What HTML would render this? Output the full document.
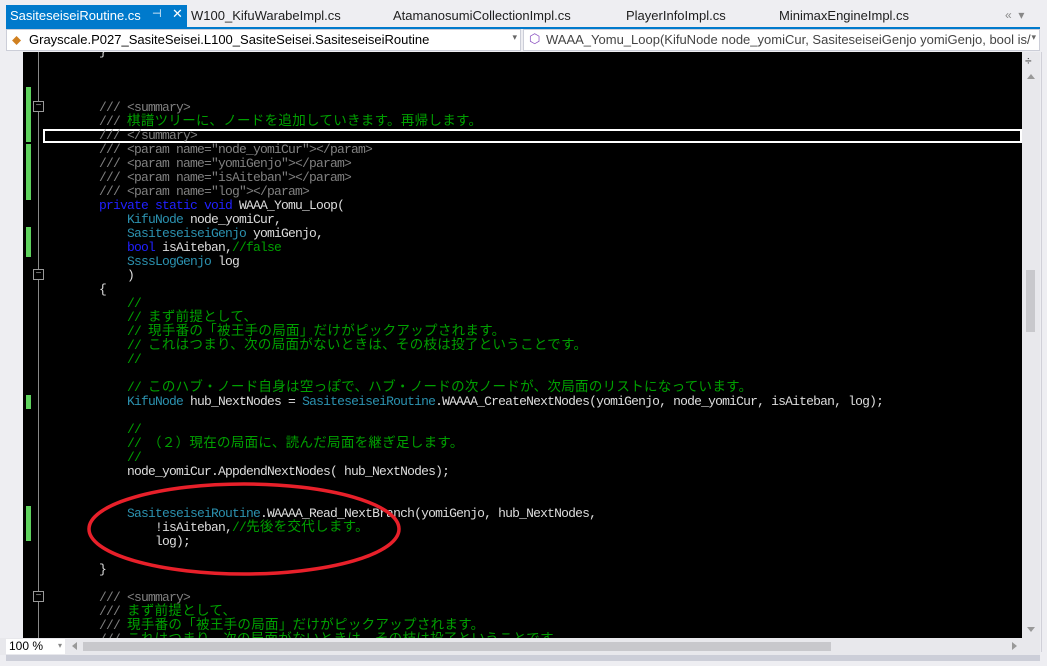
<!DOCTYPE html>
<html><head><meta charset="utf-8">
<style>
*{margin:0;padding:0;box-sizing:border-box}
body{width:1047px;height:666px;overflow:hidden;background:#eeeef2;font-family:"Liberation Sans","Noto Sans CJK JP",sans-serif;position:relative}
.tabs{position:absolute;left:0;top:0;width:1047px;height:27px;background:#eeeef2;font-size:13px;color:#1e1e1e}
.tab{position:absolute;top:8px}
.act{position:absolute;left:6px;top:5px;width:181px;height:23px;background:#007acc;color:#fff;font-size:13px;padding:3px 0 0 4px}
.bl{position:absolute;left:6px;top:27px;width:1034px;height:2px;background:#007acc}
.dd{position:absolute;top:29px;height:22px;background:#fff;border:1px solid #ccced8;font-size:13px;padding:2px 0 0 22px;white-space:nowrap;overflow:hidden}
.ed{position:absolute;left:23px;top:52px;width:999px;height:586px;background:#000;overflow:hidden}
.code{position:absolute;left:20px;top:-7px;font-family:"Liberation Mono","Noto Sans CJK JP",monospace;font-size:13px;letter-spacing:-0.8px;line-height:14px;color:#dcdcdc}
.code div{height:14px;white-space:pre;overflow:visible}
.g{color:#00a000}.d{color:#808080}.k{color:#2020ff}.t{color:#2b91af}
.j{display:inline-block;vertical-align:top;position:relative;top:-3px;height:14px;font-family:"Noto Sans CJK JP",sans-serif;font-size:13.5px;letter-spacing:.3px;line-height:14px}
.mk{position:absolute;left:3px;width:5px;background:#5ed35e}
.vsb{position:absolute;left:1022px;top:52px;width:18px;height:586px;background:#e8e8ec}
.hsb{position:absolute;left:0;top:638px;width:1040px;height:17px;background:#e8e8ec}
</style></head><body>
<div class="tabs">
<div class="act">SasiteseiseiRoutine.cs<span style="position:absolute;left:146px;top:2px;font-size:11px">⊣</span><span style="position:absolute;left:166px;top:1px">✕</span></div>
<div class="tab" style="left:191px">W100_KifuWarabeImpl.cs</div>
<div class="tab" style="left:393px">AtamanosumiCollectionImpl.cs</div>
<div class="tab" style="left:626px">PlayerInfoImpl.cs</div>
<div class="tab" style="left:779px">MinimaxEngineImpl.cs</div>
<div class="tab" style="left:1005px;color:#888;font-size:12px">«&nbsp;&nbsp;▾</div>
</div>
<div class="bl"></div>
<div class="dd" style="left:6px;width:515px">Grayscale.P027_SasiteSeisei.L100_SasiteSeisei.SasiteseiseiRoutine<span style="position:absolute;left:5px;top:2px;color:#d08020">⬥</span><span style="position:absolute;right:3px;top:2px;color:#666;font-size:9px">▾</span></div>
<div class="dd" style="left:523px;width:517px;color:#444">WAAA_Yomu_Loop(KifuNode node_yomiCur, SasiteseiseiGenjo yomiGenjo, bool is/<span style="position:absolute;left:5px;top:1px;color:#8a50c0">⬡</span><span style="position:absolute;right:3px;top:2px;color:#666;font-size:9px;background:#fff">▾</span></div>
<div style="position:absolute;left:0;top:52px;width:23px;height:586px;background:#eeeef2"></div>
<div class="ed">
<div class="mk" style="top:35px;height:55px"></div>
<div class="mk" style="top:92px;height:56px"></div>
<div class="mk" style="top:175px;height:30px"></div>
<div class="mk" style="top:343px;height:14px"></div>
<div class="mk" style="top:454px;height:35px"></div>
<div style="position:absolute;left:15px;top:0;width:1px;height:586px;background:#888"></div>
<div style="position:absolute;left:10px;top:49px;width:11px;height:11px;border:1px solid #999;background:#000;color:#999;font-size:10px;line-height:8px;text-align:center">−</div>
<div style="position:absolute;left:10px;top:217px;width:11px;height:11px;border:1px solid #999;background:#000;color:#999;font-size:10px;line-height:8px;text-align:center">−</div>
<div style="position:absolute;left:10px;top:539px;width:11px;height:11px;border:1px solid #999;background:#000;color:#999;font-size:10px;line-height:8px;text-align:center">−</div>
<div style="position:absolute;left:20px;top:77px;width:979px;height:14px;border:2px solid #fff"></div>
<div class="code"><div>        }</div><div> </div><div> </div><div> </div><div><span class="d">        /// &lt;summary&gt;</span></div><div><span class="d">        /// </span><span class="g j">棋譜ツリーに、ノードを追加していきます。再帰します。</span></div><div><span class="d">        /// &lt;/summary&gt;</span></div><div><span class="d">        /// &lt;param name="node_yomiCur"&gt;&lt;/param&gt;</span></div><div><span class="d">        /// &lt;param name="yomiGenjo"&gt;&lt;/param&gt;</span></div><div><span class="d">        /// &lt;param name="isAiteban"&gt;&lt;/param&gt;</span></div><div><span class="d">        /// &lt;param name="log"&gt;&lt;/param&gt;</span></div><div>        <span class="k">private static void</span> WAAA_Yomu_Loop(</div><div>            <span class="t">KifuNode</span> node_yomiCur,</div><div>            <span class="t">SasiteseiseiGenjo</span> yomiGenjo,</div><div>            <span class="k">bool</span> isAiteban,<span class="g">//false</span></div><div>            <span class="t">SsssLogGenjo</span> log</div><div>            )</div><div>        {</div><div class="g">            //</div><div class="g">            // <span class="j">まず前提として、</span></div><div class="g">            // <span class="j">現手番の「被王手の局面」だけがピックアップされます。</span></div><div class="g">            // <span class="j">これはつまり、次の局面がないときは、その枝は投了ということです。</span></div><div class="g">            //</div><div> </div><div class="g">            // <span class="j">このハブ・ノード自身は空っぽで、ハブ・ノードの次ノードが、次局面のリストになっています。</span></div><div>            <span class="t">KifuNode</span> hub_NextNodes = <span class="t">SasiteseiseiRoutine</span>.WAAAA_CreateNextNodes(yomiGenjo, node_yomiCur, isAiteban, log);</div><div> </div><div class="g">            //</div><div class="g">            // <span class="j">（２）現在の局面に、読んだ局面を継ぎ足します。</span></div><div class="g">            //</div><div>            node_yomiCur.AppdendNextNodes( hub_NextNodes);</div><div> </div><div> </div><div>            <span class="t">SasiteseiseiRoutine</span>.WAAAA_Read_NextBranch(yomiGenjo, hub_NextNodes,</div><div>                !isAiteban,<span class="g">//<span class="j">先後を交代します。</span></span></div><div>                log);</div><div> </div><div>        }</div><div> </div><div><span class="d">        /// &lt;summary&gt;</span></div><div><span class="d">        /// </span><span class="g j">まず前提として、</span></div><div><span class="d">        /// </span><span class="g j">現手番の「被王手の局面」だけがピックアップされます。</span></div><div><span class="d">        /// </span><span class="g j">これはつまり、次の局面がないときは、その枝は投了ということです。</span></div></div>
</div>
<svg style="position:absolute;left:0;top:0" width="1047" height="666"><ellipse cx="244" cy="529" rx="155" ry="45" fill="none" stroke="#e8202a" stroke-width="3.5"/></svg>
<div class="vsb">
<div style="position:absolute;left:3px;top:2px;font-size:12px;color:#333">÷</div>
<div style="position:absolute;left:5px;top:22px;width:0;height:0;border:4px solid transparent;border-bottom:5px solid #999;border-top:0"></div>
<div style="position:absolute;left:4px;top:218px;width:9px;height:62px;background:#c8c8cc"></div>
<div style="position:absolute;left:5px;top:575px;width:0;height:0;border:4px solid transparent;border-top:5px solid #999;border-bottom:0"></div>
</div>
<div style="position:absolute;left:1041px;top:52px;width:1px;height:600px;background:#d0d0d8"></div>
<div class="hsb">
<div style="position:absolute;left:6px;top:1px;width:59px;height:15px;background:#fff;font-size:12px;padding:0 0 0 3px">100 %<span style="position:absolute;right:3px;top:2px;font-size:8px;color:#888">▾</span></div>
<div style="position:absolute;left:72px;top:4px;width:0;height:0;border:4px solid transparent;border-right:5px solid #999;border-left:0"></div>
<div style="position:absolute;left:83px;top:4px;width:748px;height:9px;background:#c8c8cc"></div>
<div style="position:absolute;left:1012px;top:4px;width:0;height:0;border:4px solid transparent;border-left:5px solid #999;border-right:0"></div>
</div>
<div style="position:absolute;left:6px;top:655px;width:1034px;height:6px;background:#ccced8"></div>
</body></html>
